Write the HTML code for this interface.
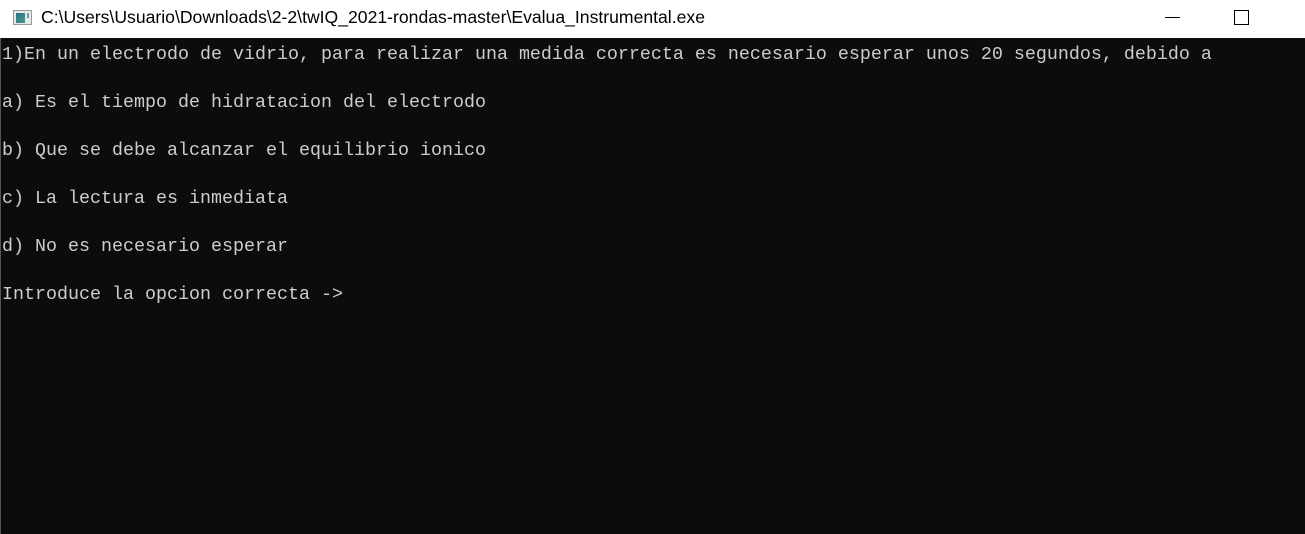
<!DOCTYPE html>
<html><head><meta charset="utf-8"><style>
html,body{margin:0;padding:0;width:1305px;height:534px;overflow:hidden;background:#fff}
.title{position:absolute;left:0;top:0;width:1305px;height:38px;background:#fff}
.title .t{position:absolute;left:41px;top:7px;font-family:"Liberation Sans",sans-serif;font-size:17.6px;color:#000;white-space:nowrap}
.icon{position:absolute;left:13px;top:10px;width:19px;height:15px;border:1px solid #9a9a9a;background:#e8e8e8;box-sizing:border-box}
.icon i{position:absolute;left:2px;top:2px;width:9px;height:10px;background:linear-gradient(135deg,#2a6f8f,#4a9a7a)}
.icon b{position:absolute;left:13px;top:2px;width:2px;height:5px;background:#6a9ab0}
.min{position:absolute;left:1165px;top:17px;width:15px;height:1px;background:#000}
.max{position:absolute;left:1234px;top:10px;width:15px;height:15px;border:1px solid #000;box-sizing:border-box}
.con{position:absolute;left:0;top:38px;width:1305px;height:496px;background:#0c0c0c;border-left:1px solid #555;box-sizing:border-box}
pre{margin:0;position:absolute;left:1px;top:5px;font-family:"Liberation Mono",monospace;font-size:18.33px;line-height:24px;color:#cccccc}
</style></head><body>
<div class="title"><div class="icon"><i></i><b></b></div><div class="t">C:\Users\Usuario\Downloads\2-2\twIQ_2021-rondas-master\Evalua_Instrumental.exe</div><div class="min"></div><div class="max"></div></div>
<div class="con"><pre>1)En un electrodo de vidrio, para realizar una medida correcta es necesario esperar unos 20 segundos, debido a

a) Es el tiempo de hidratacion del electrodo

b) Que se debe alcanzar el equilibrio ionico

c) La lectura es inmediata

d) No es necesario esperar

Introduce la opcion correcta -&gt;</pre></div>
</body></html>
